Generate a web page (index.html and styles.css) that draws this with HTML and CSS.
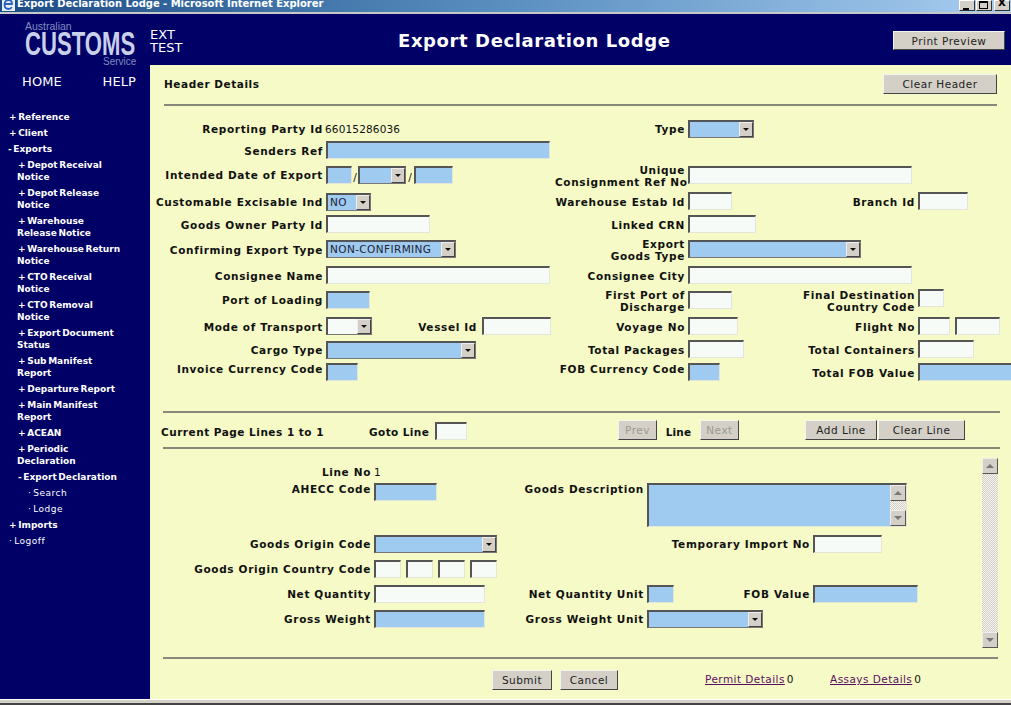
FILE: index.html
```html
<!DOCTYPE html>
<html lang="en">
<head>
<meta charset="utf-8">
<title>Export Declaration Lodge</title>
<link rel="stylesheet" href="styles.css">
</head>
<body>
<div class="titlebar">
  <svg class="ie" width="13" height="13" viewBox="0 0 13 13"><rect x="0" y="0" width="13" height="13" fill="#e8eef5"/><path d="M3 6h7c0-3-1.500-4-3.500-4S2.500 3.500 2.500 6.500 4.500 11 6.500 11c1.500 0 2.700-.6 3.300-1.800" fill="none" stroke="#2a62c0" stroke-width="1.800"/></svg>
  <span class="title-text">Export Declaration Lodge - Microsoft Internet Explorer</span>
  <span class="win-btns">
    <span class="win-btn"><span class="g-min"></span></span><span class="win-btn"><span class="g-max"></span></span><span class="win-btn gap"><span class="g-x">x</span></span>
  </span>
</div>
<div class="app">
  <aside class="side">
    <div class="logo">
      <div class="logo-a">Australian</div>
      <div class="logo-c"><span>CUSTOMS</span></div>
      <div class="logo-s">Service</div>
    </div>
    <div class="topnav"><a>HOME</a><a>HELP</a></div>
    <nav class="menu">
      <div class="m1">+ Reference</div>
      <div class="m1">+ Client</div>
      <div class="m1 minus">- Exports</div>
      <div class="m2">+ Depot Receival<br>Notice</div>
      <div class="m2">+ Depot Release<br>Notice</div>
      <div class="m2">+ Warehouse<br>Release Notice</div>
      <div class="m2">+ Warehouse Return<br>Notice</div>
      <div class="m2">+ CTO Receival<br>Notice</div>
      <div class="m2">+ CTO Removal<br>Notice</div>
      <div class="m2">+ Export Document<br>Status</div>
      <div class="m2">+ Sub Manifest<br>Report</div>
      <div class="m2">+ Departure Report</div>
      <div class="m2">+ Main Manifest<br>Report</div>
      <div class="m2">+ ACEAN</div>
      <div class="m2">+ Periodic<br>Declaration</div>
      <div class="m2">- Export Declaration</div>
      <div class="m3">· Search</div>
      <div class="m3">· Lodge</div>
      <div class="m1">+ Imports</div>
      <div class="m0">· Logoff</div>
    </nav>
  </aside>
  <main class="main">
    <header class="head">
      <div class="env">EXT<br>TEST</div>
      <h1>Export Declaration Lodge</h1>
      <button class="btn print">Print Preview</button>
    </header>
    <section class="content">
      <div class="hdr-top">
        <strong class="hd">Header Details</strong>
        <button class="btn clearh">Clear Header</button>
      </div>
      <hr class="rule r1">
      <div class="hform">
        <label class="l p3">Reporting Party Id</label>
        <div class="f val">66015286036</div>
        <label class="l p3">Type</label>
        <div class="f s2"><span class="sel w66 blue"><i></i></span></div>

        <label class="l">Senders Ref</label>
        <div class="f"><input class="w224 blue"></div>
        <div class="blank"></div>
        <div class="f s2"></div>

        <label class="l p3">Intended Date of Export</label>
        <div class="f row"><input class="w26 blue"><em>/</em><span class="sel w48 blue"><i></i></span><em class="wide">/</em><input class="w39 blue"></div>
        <label class="l two">Unique<br>Consignment Ref No</label>
        <div class="f s3"><input class="w224"></div>

        <label class="l">Customable Excisable Ind</label>
        <div class="f dn"><span class="sel w45 blue">NO<i></i></span></div>
        <label class="l">Warehouse Estab Id</label>
        <div class="f"><input class="w44"></div>
        <label class="l">Branch Id</label>
        <div class="f"><input class="w50"></div>

        <label class="l">Goods Owner Party Id</label>
        <div class="f"><input class="w104"></div>
        <label class="l">Linked CRN</label>
        <div class="f s2"><input class="w68"></div>

        <label class="l">Confirming Export Type</label>
        <div class="f"><span class="sel w130 blue">NON-CONFIRMING<i></i></span></div>
        <label class="l two">Export<br>Goods Type</label>
        <div class="f s3"><span class="sel w173 blue"><i></i></span></div>

        <label class="l">Consignee Name</label>
        <div class="f"><input class="w224"></div>
        <label class="l">Consignee City</label>
        <div class="f s3"><input class="w224"></div>

        <label class="l p3">Port of Loading</label>
        <div class="f"><input class="w44 blue"></div>
        <label class="l two">First Port of<br>Discharge</label>
        <div class="f"><input class="w44"></div>
        <label class="l two">Final Destination<br>Country Code</label>
        <div class="f up"><input class="w26"></div>

        <label class="l">Mode of Transport</label>
        <div class="f row"><span class="sel w46"><i></i></span><label class="l vessel">Vessel Id</label><input class="w69"></div>
        <label class="l">Voyage No</label>
        <div class="f"><input class="w50"></div>
        <label class="l">Flight No</label>
        <div class="f row gap5"><input class="w32"><input class="w45"></div>

        <label class="l">Cargo Type</label>
        <div class="f dn"><span class="sel w150 blue"><i></i></span></div>
        <label class="l">Total Packages</label>
        <div class="f"><input class="w56"></div>
        <label class="l">Total Containers</label>
        <div class="f"><input class="w56"></div>

        <label class="l hi">Invoice Currency Code</label>
        <div class="f"><input class="w32 blue"></div>
        <label class="l hi">FOB Currency Code</label>
        <div class="f"><input class="w32 blue"></div>
        <label class="l">Total FOB Value</label>
        <div class="f"><input class="w100 blue"></div>
      </div>
      <hr class="rule r2">
      <div class="pager">
        <strong class="cur">Current Page Lines 1 to 1</strong>
        <strong class="goto">Goto Line</strong>
        <input class="w32 gotoin">
        <button class="btn off prev">Prev</button>
        <strong class="linew">Line</strong>
        <button class="btn off next">Next</button>
        <button class="btn add">Add Line</button>
        <button class="btn clearl">Clear Line</button>
      </div>
      <hr class="rule r3">
      <div class="lines">
        <div class="lform">
          <label class="l hi">Line No</label>
          <div class="f val ln">1</div>
          <div class="blank sp4"></div>

          <label class="l hi">AHECC Code</label>
          <div class="f"><input class="w63 blue"></div>
          <label class="l hi">Goods Description</label>
          <div class="f s3">
            <div class="ta"><span class="sb"><b class="up-a"></b><b class="dn-a"></b></span></div>
          </div>

          <label class="l">Goods Origin Code</label>
          <div class="f"><span class="sel w123 blue"><i></i></span></div>
          <div class="blank sp2"></div>
          <label class="l">Temporary Import No</label>
          <div class="f"><input class="w69"></div>

          <label class="l">Goods Origin Country Code</label>
          <div class="f row gap5"><input class="w27"><input class="w27"><input class="w27"><input class="w27"></div>
          <div class="blank sp4"></div>

          <label class="l">Net Quantity</label>
          <div class="f"><input class="w111"></div>
          <label class="l">Net Quantity Unit</label>
          <div class="f"><input class="w27 blue"></div>
          <label class="l">FOB Value</label>
          <div class="f"><input class="w105 blue"></div>

          <label class="l">Gross Weight</label>
          <div class="f"><input class="w111 blue"></div>
          <label class="l">Gross Weight Unit</label>
          <div class="f s3"><span class="sel w116 blue"><i></i></span></div>
        </div>
        <div class="vscroll"><b class="up-a"></b><b class="dn-a"></b></div>
      </div>
      <hr class="rule r4">
      <div class="actions">
        <button class="btn submit">Submit</button>
        <button class="btn cancel">Cancel</button>
        <span class="lnk permit"><a>Permit Details</a><span>0</span></span>
        <span class="lnk"><a>Assays Details</a><span>0</span></span>
      </div>
    </section>
  </main>
</div>
<div class="statusbar"></div>
</body>
</html>
```

FILE: styles.css
```css
* { box-sizing: border-box; }
html, body { margin: 0; padding: 0; height: 705px; overflow: hidden; }
body { font-family: "DejaVu Sans", Verdana, sans-serif; font-size: 10.5px; color: #111; background: #f5fac6; width: 1011px; }

.titlebar { height: 14px; display: flex; align-items: flex-start; background: linear-gradient(90deg, #1c4c85 0%, #5a8fc0 50%, #a8cdf0 100%); border-bottom: 2px solid #c4c8c8; overflow: hidden; position: relative; }
.ie { margin: -2px 2px 0 2px; flex: none; }
.title-text { font: bold 10px/11px "DejaVu Sans", sans-serif; color: #fff; margin-top: -2px; white-space: nowrap; letter-spacing: -.03px; }
.win-btns { margin-left: auto; display: flex; }
.win-btn { width: 16px; height: 11px; background: #d4d0c8; border: 1px solid #fff; border-right-color: #333; border-bottom-color: #333; margin-right: 1px; position: relative; }
.win-btn.gap { margin-left: 1px; }
.g-min { position: absolute; left: 3px; bottom: 0; width: 6px; height: 2px; background: #000; }
.g-max { position: absolute; left: 2px; top: 0; width: 9px; height: 8px; border: 1px solid #000; border-top-width: 2px; }
.g-x { position: absolute; left: 3px; top: -5px; font: bold 12px/12px "DejaVu Sans", sans-serif; color: #000; }

.app { display: flex; height: 685px; }
.side { width: 150px; flex: none; background: #000066; color: #fff; }
.logo { height: 51px; padding: 7px 0 0 25px; position: relative; }
.logo-a { font: 10.5px/10px "Liberation Sans", sans-serif; color: #7f8cc0; }
.logo-c { height: 26px; }
.logo-c span { display: inline-block; font: bold 33px/26px "Liberation Sans", sans-serif; color: #c8d0ea; transform: scaleX(.67); transform-origin: 0 50%; white-space: nowrap; }
.logo-s { font: 10px/8px "Liberation Sans", sans-serif; color: #7f8cc0; padding: 1px 0 0 78px; }
.topnav { display: flex; justify-content: space-between; padding: 9px 14px 0 22px; font-size: 13px; line-height: 15px; letter-spacing: .1px; }
.menu { padding-top: 22px; font-weight: bold; font-size: 9px; line-height: 12px; word-spacing: -1.5px; }
.m1, .m2, .m3, .m0 { margin-bottom: 4px; }
.m1 { padding-left: 9px; }
.m1.minus { padding-left: 8px; }
.m2 { padding-left: 17px; text-indent: 1px; white-space: nowrap; }
.m3 { padding-left: 28px; font-weight: normal; letter-spacing: .5px; }
.m0 { padding-left: 9px; font-weight: normal; letter-spacing: .5px; }

.main { width: 861px; display: flex; flex-direction: column; }
.head { height: 51px; background: #000066; color: #fff; display: flex; align-items: flex-start; position: relative; }
.env { font-size: 13px; line-height: 13px; padding-top: 14px; width: 248px; }
.head h1 { margin: 15px 0 0; font-size: 18px; line-height: 24px; font-weight: bold; white-space: nowrap; letter-spacing: .6px; width: 495px; }
.btn { font: 10.5px/14px "DejaVu Sans", sans-serif; letter-spacing: .5px; color: #222; background: #d4d0c8; height: 20px; padding: 0; border: 1px solid; border-color: #f4f4f0 #444 #444 #f4f4f0; }
.print { width: 112px; height: 19px; margin-top: 17px; }

.content { flex: 1; background: #f5fac6; overflow: hidden; }
.hdr-top { display: flex; justify-content: space-between; align-items: center; height: 20px; margin: 9px 14px 0 14px; }
.hd { letter-spacing: .55px; }
.clearh { width: 114px; }
.rule { height: 2px; border: 0; background: #85887a; margin: 0; }
.r1 { margin: 10px 14px 0 14px; }

.hform { display: grid; margin-top: 14px; grid-template-columns: 173px 226px 130px 112px 112px 100px; column-gap: 3px;
  grid-template-rows: 21px 25px 26px 23px 25px 26px 25px 26px 23px 23px 22px; }
.lform { display: grid; flex: none; width: 819px; grid-template-columns: 208px 146px 121px 16px 144px 169px; column-gap: 3px; margin-left: 13px;
  grid-template-rows: 17px 52px 25px 25px 25px 25px; margin-top: 17px; }
.l { display: block; text-align: right; font-weight: bold; line-height: 12px; height: 18px; padding-top: 4px; white-space: nowrap; letter-spacing: .65px; }
.l.p3, .lform .l { padding-top: 3px; }
.l.two { height: 24px; padding-top: 0; margin-top: -2px; }
.l.hi, .lform .l.hi { padding-top: 0; }
.f { min-width: 0; white-space: nowrap; }
.val { line-height: 18px; letter-spacing: .15px; margin-left: -1px; }
.ln { line-height: 12px; margin-left: 0; }
.s2, .s3 { grid-column: span 3; }
.blank { min-width: 0; }
.sp2 { grid-column: span 2; }
.sp4 { grid-column: span 4; }
.dn { margin-top: 1px; }
.up { margin-top: -2px; }
.row { display: flex; align-items: flex-start; }
.row em { font-style: normal; width: 6px; text-align: center; line-height: 22px; }
.row em.wide { width: 8px; }
.gap5 { gap: 5px; }
.vessel { width: 105px; flex: none; margin-right: 5px; }

input, .sel { height: 18px; background: #f6fbf8; border: 2px solid; border-color: #555 #e4e6da #e4e6da #555; border-width: 2px 1px 1px 2px; padding: 0; margin: 0; display: block; border-radius: 0; outline: 0; }
input.blue, .sel.blue { background: #9fcbf1; }
.sel { position: relative; font-size: 10.5px; line-height: 14px; padding-left: 2px; letter-spacing: .4px; color: #223; border-color: #555 #777 #777 #555; }
.sel i { position: absolute; right: 0; top: 0; width: 14px; height: 15px; background: #d4d0c8; border: 1px solid; border-color: #eee #444 #444 #eee; }
.sel i::after { content: ""; position: absolute; left: 3px; top: 5px; border: 3px solid transparent; border-top: 3px solid #111; border-bottom: 0; }

.w26 { width: 26px; } .w27 { width: 27px; } .w32 { width: 32px; } .w39 { width: 39px; }
.w44 { width: 44px; } .w45 { width: 45px; } .w46 { width: 46px; } .w48 { width: 48px; }
.w50 { width: 50px; } .w56 { width: 56px; } .w63 { width: 63px; } .w66 { width: 66px; }
.w68 { width: 68px; } .w69 { width: 69px; } .w100 { width: 100px; } .w104 { width: 104px; }
.w105 { width: 105px; } .w111 { width: 111px; } .w116 { width: 116px; } .w123 { width: 123px; }
.w130 { width: 130px; } .w150 { width: 150px; } .w173 { width: 173px; } .w224 { width: 224px; }

.r2 { margin: 26px 11px 0 13px; }
.pager { display: flex; align-items: flex-start; height: 34px; padding: 7px 0 0 11px; font-size: 10.5px; }
.pager strong { line-height: 24px; }
.cur { width: 208px; letter-spacing: .5px; white-space: nowrap; }
.goto { width: 66px; letter-spacing: .4px; white-space: nowrap; }
.gotoin { margin-top: 2px; }
.prev { width: 39px; margin-left: 151px; }
.next { width: 39px; }
.linew { width: 43px; text-align: center; letter-spacing: .2px; }
.off { color: #9a9a92; }
.add { width: 72px; margin-left: 66px; }
.clearl { width: 87px; margin-left: 1px; }
.r3 { margin: 0 11px 0 13px; }

.lines { display: flex; align-items: flex-start; height: 208px; }
.vscroll { width: 16px; height: 190px; margin: 9px 0 0 0; position: relative; background: repeating-conic-gradient(#d4d0c8 0 25%, #f5f5ee 0 50%) 0 0 / 2px 2px; flex: none; }
.up-a, .dn-a { position: absolute; left: 0; width: 16px; height: 16px; background: #d4d0c8; border: 1px solid; border-color: #eee #555 #555 #eee; }
.up-a { top: 0; } .dn-a { bottom: 0; }
.up-a::after, .dn-a::after { content: ""; position: absolute; left: 3px; top: 5px; border: 4px solid transparent; }
.up-a::after { border-bottom-color: #777; border-top: 0; }
.dn-a::after { border-top-color: #777; border-bottom: 0; }
.ta { width: 260px; height: 44px; background: #9fcbf1; border: 2px solid; border-color: #555 #e4e6da #e4e6da #555; border-width: 2px 1px 1px 2px; position: relative; }
.sb { position: absolute; right: 0; top: 0; bottom: 0; width: 16px; background: repeating-conic-gradient(#d4d0c8 0 25%, #f5f5ee 0 50%) 0 0 / 2px 2px; }

.r4 { margin: 0 13px 0 13px; }
.actions { display: flex; align-items: flex-start; padding: 11px 0 0 342px; }
.submit { width: 60px; }
.cancel { width: 58px; margin-left: 8px; }
.lnk { display: flex; gap: 2px; line-height: 18px; letter-spacing: .45px; margin-left: 36px; }
.permit { margin-left: 87px; }
.lnk a { color: #5a1060; text-decoration: underline; }

.statusbar { height: 6px; background: #d4d0c8; border-top: 1px solid #fff; border-bottom: 2px solid #444; }
```
